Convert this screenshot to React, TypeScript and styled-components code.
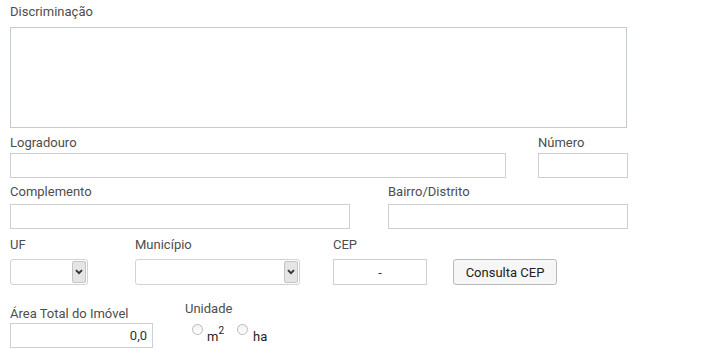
import React from "react";
import styled, { createGlobalStyle } from "styled-components";

const Global = createGlobalStyle`
  html, body { margin: 0; padding: 0; background: #fff; }
  body {
    font-family: Roboto, "Liberation Sans", Arial, sans-serif;
    font-size: 13px;
    color: #4a4a4a;
  }
  * { box-sizing: border-box; }
`;

const Form = styled.form`
  display: flex;
  flex-direction: column;
  padding: 4px 10px 0;
`;

const Row = styled.div<{ $top?: number }>`
  display: flex;
  align-items: flex-start;
  margin-top: ${(p) => p.$top ?? 0}px;
`;

const Field = styled.div<{ $w: number; $gap: number; $left?: number; $pt?: number }>`
  display: flex;
  flex-direction: column;
  width: ${(p) => p.$w}px;
  margin-left: ${(p) => p.$left ?? 0}px;
  padding-top: ${(p) => p.$pt ?? 0}px;
  gap: ${(p) => p.$gap}px;
`;

const Label = styled.label`
  font-size: 13px;
  line-height: 16px;
  color: #4d4d4d;
  white-space: nowrap;
`;

const TextArea = styled.textarea`
  width: 100%;
  height: 101px;
  border: 1px solid #c2cad2;
  border-radius: 0;
  resize: none;
  padding: 4px;
  font: inherit;
  outline: none;
`;

const Input = styled.input<{ $h?: number; $align?: "left" | "right" | "center" }>`
  width: 100%;
  height: ${(p) => p.$h ?? 25}px;
  border: 1px solid #cfcfcf;
  border-radius: 0;
  padding: 0 5px;
  font-family: Roboto, "Liberation Sans", Arial, sans-serif;
  font-size: 13px;
  color: #333;
  text-align: ${(p) => p.$align ?? "left"};
  background: #fff;
  outline: none;
`;

const SelectBox = styled.div`
  display: flex;
  height: 26px;
  border: 1px solid #d2d2d2;
  border-radius: 3px;
  padding: 1px 1px 1px 0;
  background: #fff;
`;

const NativeSelect = styled.select`
  flex: 1;
  min-width: 0;
  appearance: none;
  border: 0;
  background: transparent;
  font: inherit;
  outline: none;
`;

const ArrowBox = styled.span`
  width: 14px;
  display: flex;
  align-items: center;
  justify-content: center;
  background: #e5e5e8;
  border: 1px solid #c4c4c4;
  border-radius: 2px;
`;

const Button = styled.button`
  width: 104px;
  height: 26px;
  margin-left: 26px;
  margin-top: 22px;
  border: 1px solid #b9b9b9;
  border-radius: 3px;
  background: #f6f6f6;
  font-family: Roboto, "Liberation Sans", Arial, sans-serif;
  font-size: 13px;
  color: #222;
  padding: 0;
`;

const RadioRow = styled.div`
  display: flex;
  align-items: flex-start;
  margin-top: 7px;
`;

const RadioOption = styled.label<{ $left: number }>`
  display: flex;
  align-items: flex-start;
  margin-left: ${(p) => p.$left}px;
  color: #222;
`;

const Radio = styled.input`
  appearance: none;
  width: 11px;
  height: 11px;
  margin: 0;
  border: 1px solid #bcbcbc;
  border-radius: 50%;
  background: linear-gradient(#f2f2f2, #ffffff);
`;

const RadioText = styled.span<{ $gap: number }>`
  margin-left: ${(p) => p.$gap}px;
  padding-top: 5px;
  font-size: 13px;
  line-height: 16px;
`;

const Sup = styled.sup`
  font-size: 10px;
  line-height: 0;
  vertical-align: 7px;
`;

function Chevron() {
  return (
    <svg width="8" height="6" viewBox="0 0 8 6">
      <path d="M1 1.2 L4 4.2 L7 1.2" fill="none" stroke="#333" strokeWidth="1.9" />
    </svg>
  );
}

function Select() {
  return (
    <SelectBox>
      <NativeSelect>
        <option value=""></option>
      </NativeSelect>
      <ArrowBox>
        <Chevron />
      </ArrowBox>
    </SelectBox>
  );
}

export default function App() {
  return (
    <>
      <Global />
      <Form>
        <Row>
          <Field $w={617} $gap={7}>
            <Label>Discriminação</Label>
            <TextArea />
          </Field>
        </Row>
        <Row $top={7}>
          <Field $w={496} $gap={2}>
            <Label>Logradouro</Label>
            <Input />
          </Field>
          <Field $w={90} $gap={2} $left={32}>
            <Label>Número</Label>
            <Input />
          </Field>
        </Row>
        <Row $top={6}>
          <Field $w={340} $gap={4}>
            <Label>Complemento</Label>
            <Input />
          </Field>
          <Field $w={240} $gap={4} $left={38}>
            <Label>Bairro/Distrito</Label>
            <Input />
          </Field>
        </Row>
        <Row $top={8}>
          <Field $w={78} $gap={6}>
            <Label>UF</Label>
            <Select />
          </Field>
          <Field $w={165} $gap={6} $left={47}>
            <Label>Município</Label>
            <Select />
          </Field>
          <Field $w={94} $gap={6} $left={33}>
            <Label>CEP</Label>
            <Input $h={26} $align="center" defaultValue="-" />
          </Field>
          <Button type="button">Consulta CEP</Button>
        </Row>
        <Row $top={16}>
          <Field $w={143} $gap={1} $pt={5}>
            <Label>Área Total do Imóvel</Label>
            <Input $align="right" defaultValue="0,0" />
          </Field>
          <Field $w={120} $gap={0} $left={32}>
            <Label>Unidade</Label>
            <RadioRow>
              <RadioOption $left={7}>
                <Radio type="radio" name="unidade" />
                <RadioText $gap={4}>
                  m<Sup>2</Sup>
                </RadioText>
              </RadioOption>
              <RadioOption $left={13}>
                <Radio type="radio" name="unidade" />
                <RadioText $gap={5}>ha</RadioText>
              </RadioOption>
            </RadioRow>
          </Field>
        </Row>
      </Form>
    </>
  );
}
